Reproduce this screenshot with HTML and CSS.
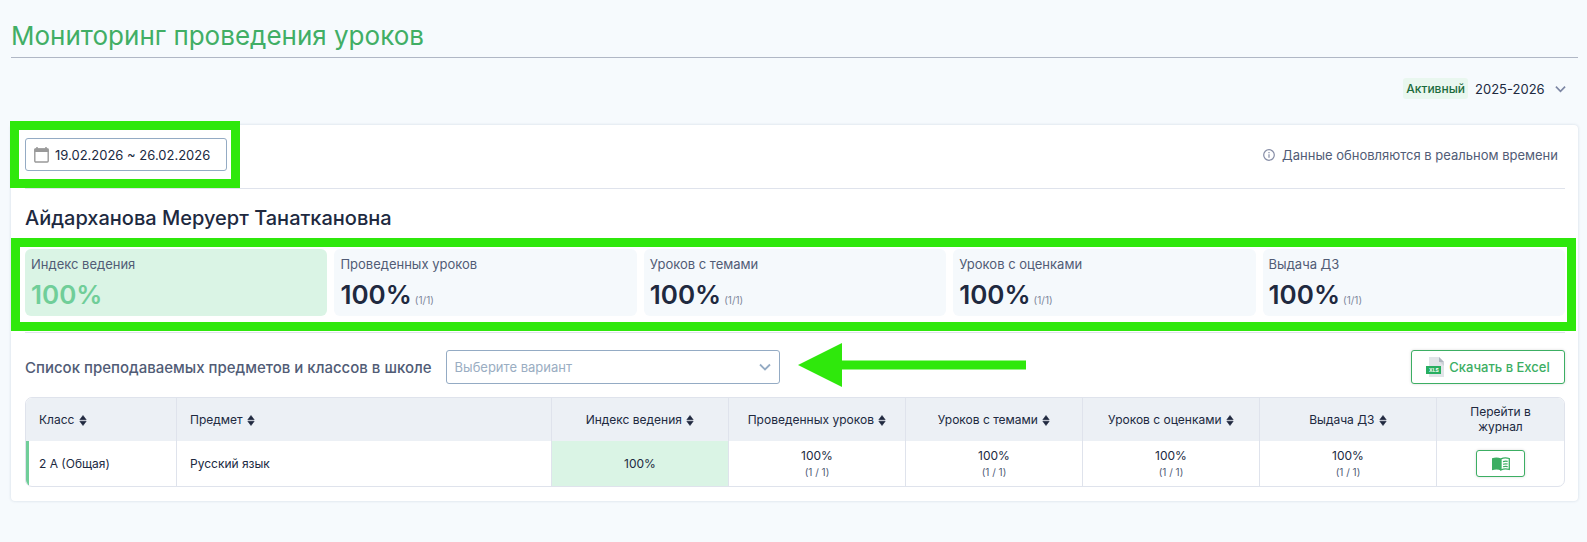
FILE: index.html
```html
<!DOCTYPE html>
<html lang="ru">
<head>
    <meta charset="UTF-8">
    <meta name="viewport" content="width=device-width, initial-scale=1.0">
    <title>Мониторинг проведения уроков</title>
    <link rel="stylesheet" href="styles.css">
</head>
<body>
    <!-- Shared icons -->
    <svg class="sprite" aria-hidden="true">
        <symbol id="icon-sort" viewBox="0 0 8 11">
            <path d="M4 0.5 7.2 4.7H0.8zM4 10.5 7.2 6.3H0.8z" fill="currentColor" stroke="currentColor" stroke-width="0.6" stroke-linejoin="round"/>
        </symbol>
        <symbol id="icon-chevron" viewBox="0 0 12 8">
            <path d="M1 1.5 6 6.5 11 1.5" fill="none" stroke="currentColor" stroke-width="1.8"/>
        </symbol>
    </svg>

    <div class="page">
        <h1 class="page-title">Мониторинг проведения уроков</h1>

        <div class="year">
            <label class="badge" for="year">Активный</label>
            <div class="year-field">
                <select id="year" class="year-select">
                    <option>2025-2026</option>
                </select>
                <svg class="chevron"><use href="#icon-chevron"/></svg>
            </div>
        </div>

        <div class="card">
            <div class="toolbar">
                <div class="date-field">
                    <svg class="calendar" viewBox="0 0 15 16">
                        <path d="M3 0v3M12 0v3" stroke="#999" stroke-width="1.5"/>
                        <rect x="0.8" y="2" width="13.4" height="13" rx="1" fill="none" stroke="#999" stroke-width="1.4"/>
                        <path d="M0.5 1.5h14v3.5h-14z" fill="#999"/>
                    </svg>
                    <input class="date-input" type="text" value="19.02.2026 ~ 26.02.2026" aria-label="Период">
                    <div class="frame frame-date"></div>
                </div>
                <div class="note">
                    <svg class="info" viewBox="0 0 12 12">
                        <circle cx="6" cy="6" r="5.3" fill="none" stroke="currentColor" stroke-width="1.2"/>
                        <path d="M6 5.2v3.6M6 3.1v1.2" stroke="currentColor" stroke-width="1.2"/>
                    </svg>
                    Данные обновляются в реальном времени
                </div>
            </div>

            <h2 class="teacher">Айдарханова Меруерт Танаткановна</h2>

            <!-- Summary -->
            <div class="stats">
                <div class="stat stat-main">
                    <div class="stat-label">Индекс ведения</div>
                    <div class="stat-value">100%</div>
                </div>
                <div class="stat">
                    <div class="stat-label">Проведенных уроков</div>
                    <div class="stat-value">100% <small>(1/1)</small></div>
                </div>
                <div class="stat">
                    <div class="stat-label">Уроков с темами</div>
                    <div class="stat-value">100% <small>(1/1)</small></div>
                </div>
                <div class="stat">
                    <div class="stat-label">Уроков с оценками</div>
                    <div class="stat-value">100% <small>(1/1)</small></div>
                </div>
                <div class="stat">
                    <div class="stat-label">Выдача ДЗ</div>
                    <div class="stat-value">100% <small>(1/1)</small></div>
                </div>
                <div class="frame frame-stats"></div>
            </div>

            <!-- Subject filter -->
            <div class="filter">
                <label class="filter-label" for="subject">Список преподаваемых предметов и классов в школе</label>
                <div class="subject-field">
                    <select id="subject" class="subject-select">
                        <option>Выберите вариант</option>
                    </select>
                    <svg class="chevron"><use href="#icon-chevron"/></svg>
                    <svg class="arrow" viewBox="0 0 228 44">
                        <path d="M0 22 44 0v17.500h184v9H44V44z" fill="#2fe80c"/>
                    </svg>
                </div>
                <button class="btn btn-excel" type="button">
                    <svg class="xls" viewBox="0 0 18 20">
                        <path d="M3 0h10l5 5v15H3z" fill="#e1e4e8"/>
                        <path d="M13 0l5 5h-5z" fill="#aeb6bf"/>
                        <path d="M14 5h4v4z" fill="#cdd2d8"/>
                        <rect x="0" y="9" width="15" height="8" fill="#27ae60"/>
                        <text class="xls-text" x="3" y="15">XLS</text>
                    </svg>
                    Скачать в Excel
                </button>
            </div>

            <table class="table">
                <colgroup>
                    <col class="col-class">
                    <col>
                    <col class="col-value">
                    <col class="col-value">
                    <col class="col-value">
                    <col class="col-value">
                    <col class="col-value">
                    <col class="col-journal">
                </colgroup>
                <thead>
                    <tr>
                        <th class="left">Класс <svg class="sort"><use href="#icon-sort"/></svg></th>
                        <th class="left">Предмет <svg class="sort"><use href="#icon-sort"/></svg></th>
                        <th>Индекс ведения <svg class="sort"><use href="#icon-sort"/></svg></th>
                        <th>Проведенных уроков <svg class="sort"><use href="#icon-sort"/></svg></th>
                        <th>Уроков с темами <svg class="sort"><use href="#icon-sort"/></svg></th>
                        <th>Уроков с оценками <svg class="sort"><use href="#icon-sort"/></svg></th>
                        <th>Выдача ДЗ <svg class="sort"><use href="#icon-sort"/></svg></th>
                        <th>Перейти в журнал</th>
                    </tr>
                </thead>
                <tbody>
                    <tr>
                        <td class="left marked">2 А (Общая)</td>
                        <td class="left">Русский язык</td>
                        <td class="good">100%</td>
                        <td>100%<small>(1 / 1)</small></td>
                        <td>100%<small>(1 / 1)</small></td>
                        <td>100%<small>(1 / 1)</small></td>
                        <td>100%<small>(1 / 1)</small></td>
                        <td>
                            <button class="btn btn-journal" type="button" aria-label="Журнал">
                                <svg class="book" viewBox="0 0 18 14">
                                    <path d="M9 1.500C6.500 0.200 3 0.200 0 1.200v12c3-1 6.500-1 9 0.300z" fill="#3cae63"/>
                                    <path d="M9 1.800C11.500 0.700 14.500 0.700 17.300 1.500v11c-2.800-0.800-5.800-0.700-8.300 0.500z" fill="none" stroke="#3cae63" stroke-width="1.300"/>
                                    <path d="M11 4.600c1.600-0.500 3-0.500 4.700-0.200M11 7.200c1.600-0.500 3-0.500 4.700-0.200M11 9.800c1.600-0.500 3-0.500 4.700-0.200" fill="none" stroke="#3cae63" stroke-width="1.200"/>
                                </svg>
                            </button>
                        </td>
                    </tr>
                </tbody>
            </table>
        </div>
    </div>
</body>
</html>
```
FILE: styles.css
```css
/* General styles */
* {
    box-sizing: border-box;
}
body {
    margin: 0;
    background-color: #f6fafd;
    color: #20293f;
    font-family: Inter, "Noto Sans", sans-serif;
    font-size: 13px;
}
select, input, button {
    font: inherit;
    color: inherit;
}
.sprite {
    display: none;
}
.page {
    padding: 16px 9px 40px 11px;
}
.page-title {
    margin: 0;
    height: 42px;
    border-bottom: 1px solid #b0b7c5;
    color: #41ae65;
    font-size: 26px;
    font-weight: 400;
    line-height: 40px;
}
/* School year */
.year {
    display: flex;
    justify-content: flex-end;
    align-items: center;
    height: 67px;
    padding: 0 12px 6px 0;
}
.badge {
    padding: 0 3px;
    border-radius: 3px;
    background-color: #e9f7ef;
    color: #1c6b3c;
    font-size: 12px;
    font-weight: 500;
    line-height: 21px;
}
.year-field {
    position: relative;
    margin-left: 7px;
}
.year-select {
    display: block;
    width: 91px;
    padding: 0;
    border: none;
    background: none;
    appearance: none;
}
.chevron {
    position: absolute;
    right: 0;
    top: 4px;
    width: 11px;
    height: 8px;
    color: #7c86a3;
    pointer-events: none;
}
/* Card */
.card {
    padding: 13px 13px 14px 14px;
    border-radius: 4px;
    background-color: white;
    box-shadow: 0 0 3px rgba(60, 90, 130, 0.2);
}
.toolbar {
    display: flex;
    justify-content: space-between;
    align-items: flex-start;
    height: 51px;
    border-bottom: 1px solid #dfe3ec;
}
.date-field {
    position: relative;
}
.calendar {
    position: absolute;
    left: 9px;
    top: 9px;
    width: 15px;
    height: 16px;
}
.date-input {
    width: 202px;
    height: 33px;
    padding: 0 0 0 29px;
    border: 1px solid #94abc4;
    border-radius: 3px;
    background-color: white;
}
.note {
    display: flex;
    align-items: center;
    gap: 7px;
    height: 33px;
    padding-right: 7px;
    color: #515c76;
}
.info {
    width: 12px;
    height: 12px;
    color: #868da6;
}
.teacher {
    margin: 16px 0 17px;
    font-size: 20px;
    font-weight: 500;
    line-height: 27px;
}
/* Highlight frames */
.frame {
    position: absolute;
    border: 9px solid #2fe80c;
    pointer-events: none;
}
.frame-date {
    inset: -17px -13px -17px -15px;
}
.frame-stats {
    inset: -11px -11px -15px -14px;
}
/* Summary */
.stats {
    position: relative;
    display: grid;
    grid-template-columns: repeat(5, 1fr);
    gap: 7px;
}
.stat {
    height: 67px;
    padding: 6px;
    border-radius: 6px;
    background-color: #f5f9fc;
}
.stat-label {
    color: #515c76;
    line-height: 19px;
}
.stat-value {
    display: flex;
    align-items: baseline;
    gap: 3px;
    font-size: 26px;
    font-weight: 600;
    line-height: 42px;
}
.stat-value small {
    color: #7d869b;
    font-size: 10px;
    font-weight: 400;
    line-height: 12px;
}
.stat-main {
    background-color: #daf4e5;
}
.stat-main .stat-value {
    color: #70ce99;
}
/* Filter */
.filter {
    display: flex;
    align-items: center;
    margin-top: 16px;
    padding: 17px 0 13px;
    border-top: 1px solid #dfe3ec;
}
.filter-label {
    color: #515c76;
    font-size: 15px;
    font-weight: 500;
}
.subject-field {
    position: relative;
    margin-left: 14px;
}
.subject-select {
    width: 334px;
    height: 34px;
    padding: 0 8px;
    border: 1px solid #94abc4;
    border-radius: 3px;
    background-color: white;
    color: #9aadc2;
    appearance: none;
}
.subject-field .chevron {
    right: 9px;
    top: 13px;
    width: 12px;
    color: #94abc4;
}
.arrow {
    position: absolute;
    left: 352px;
    top: -7px;
    width: 228px;
    height: 44px;
}
.btn {
    border: 1px solid #3cae63;
    border-radius: 3px;
    background-color: white;
    box-shadow: 0 0 3px rgba(0, 0, 0, 0.15);
    color: #3cae63;
    cursor: pointer;
}
.btn-excel {
    display: flex;
    align-items: center;
    justify-content: center;
    gap: 5px;
    width: 154px;
    height: 34px;
    margin-left: auto;
    padding: 0;
    font-weight: 500;
    white-space: nowrap;
}
.xls {
    width: 18px;
    height: 20px;
}
.xls-text {
    fill: white;
    font-size: 5px;
    font-weight: 700;
}
/* Table */
.table {
    width: 100%;
    table-layout: fixed;
    border: 1px solid #dfe3ec;
    border-radius: 7px;
    border-spacing: 0;
    overflow: hidden;
    font-size: 12px;
    line-height: 15px;
    text-align: center;
}
.col-class {
    width: 150px;
}
.col-value {
    width: 177px;
}
.col-journal {
    width: 128px;
}
.table th, .table td {
    padding: 0 14px;
    border-left: 1px solid #dfe3ec;
}
.table th {
    height: 43px;
    padding: 0 10px 1px;
    background-color: #ecf0f5;
    font-weight: 400;
}
.table td {
    height: 45px;
}
.table th:first-child {
    border-left: none;
}
.table .left {
    padding-left: 13px;
    text-align: left;
}
.table td.marked {
    padding-left: 10px;
    border-left: 3px solid #70ce99;
}
.table .good {
    background-color: #daf4e5;
}
.table small {
    display: block;
    margin-top: 2px;
    color: #515c76;
    font-size: 10px;
}
.sort {
    width: 8px;
    height: 11px;
    margin-left: 1px;
    vertical-align: -2px;
}
.btn-journal {
    display: block;
    width: 49px;
    height: 27px;
    margin: 0 auto;
    padding: 0;
}
.book {
    display: block;
    width: 18px;
    height: 14px;
    margin: 0 auto;
}
```
